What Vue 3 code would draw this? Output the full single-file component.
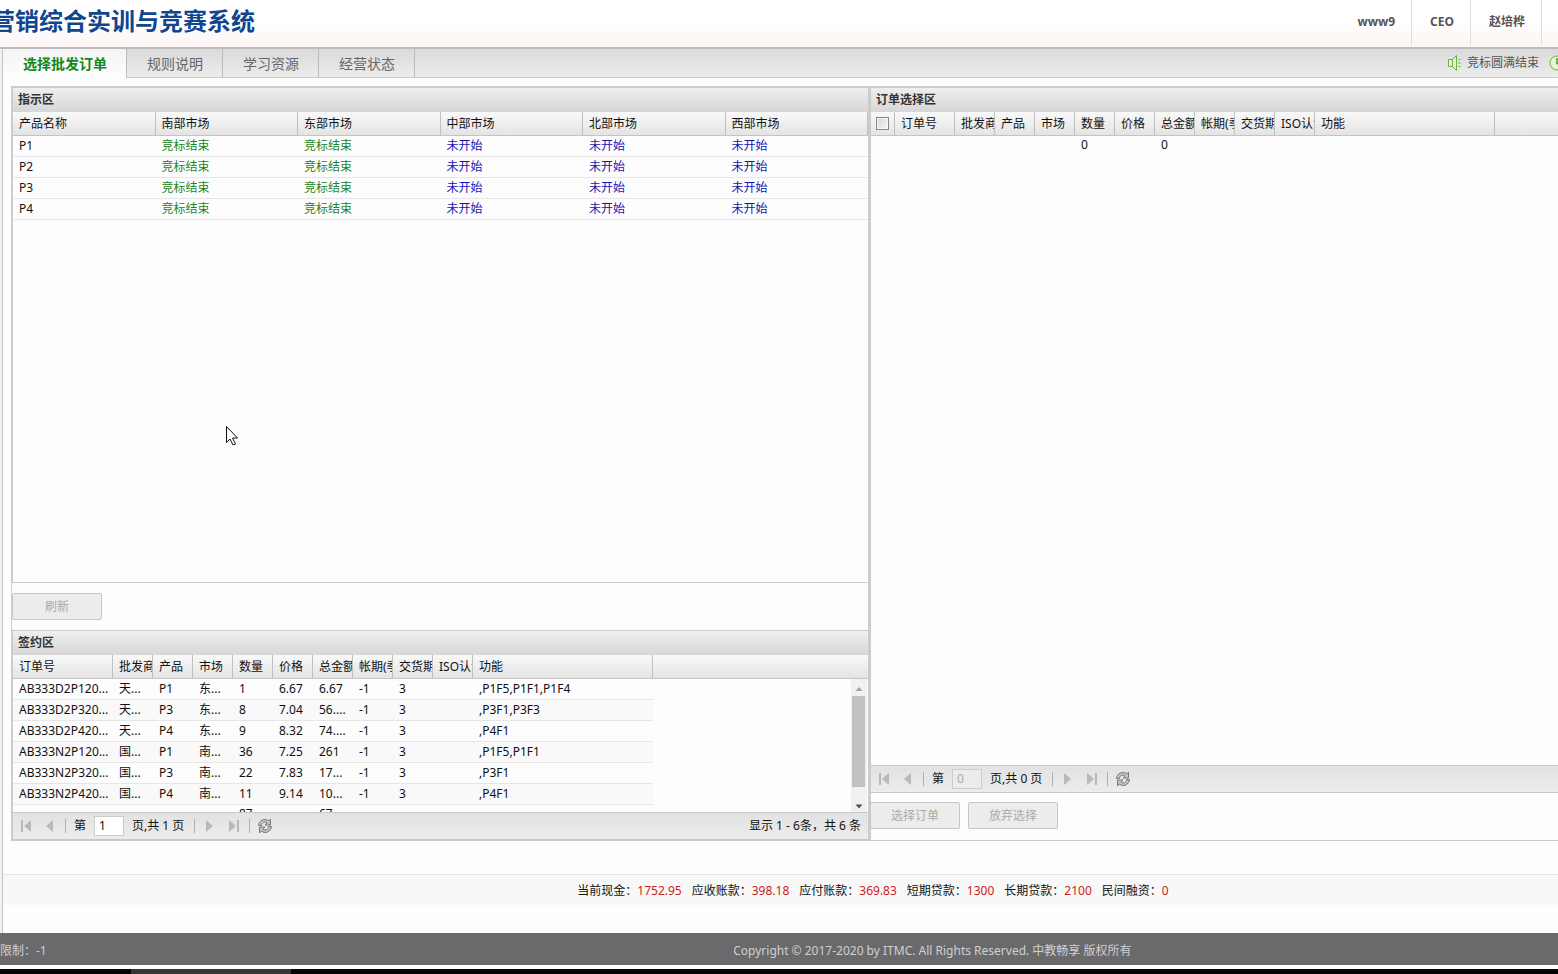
<script setup>
import { ref } from 'vue'

const users = ['www9', 'CEO', '赵培桦']
const tabs = ['选择批发订单', '规则说明', '学习资源', '经营状态']
const activeTab = ref(0)

const marketHeads = ['产品名称', '南部市场', '东部市场', '中部市场', '北部市场', '西部市场']
const done = '竞标结束'
const idle = '未开始'
const markets = ['P1', 'P2', 'P3', 'P4'].map((name) => ({ name, states: [done, done, idle, idle, idle] }))

const orderHeads = ['订单号', '批发商', '产品', '市场', '数量', '价格', '总金额', '帐期(季)', '交货期', 'ISO认证', '功能']
const signed = [
  ['AB333D2P120...', '天...', 'P1', '东...', '1', '6.67', '6.67', '-1', '3', '', ',P1F5,P1F1,P1F4'],
  ['AB333D2P320...', '天...', 'P3', '东...', '8', '7.04', '56....', '-1', '3', '', ',P3F1,P3F3'],
  ['AB333D2P420...', '天...', 'P4', '东...', '9', '8.32', '74....', '-1', '3', '', ',P4F1'],
  ['AB333N2P120...', '国...', 'P1', '南...', '36', '7.25', '261', '-1', '3', '', ',P1F5,P1F1'],
  ['AB333N2P320...', '国...', 'P3', '南...', '22', '7.83', '17...', '-1', '3', '', ',P3F1'],
  ['AB333N2P420...', '国...', 'P4', '南...', '11', '9.14', '10...', '-1', '3', '', ',P4F1'],
]
const signedTotal = ['', '', '', '', '87', '', '67...', '', '', '', '']
const orderTotal = ['', '', '', '', '0', '', '0', '', '', '', '']

const funds = [
  ['当前现金：', '1752.95'],
  ['应收账款：', '398.18'],
  ['应付账款：', '369.83'],
  ['短期贷款：', '1300'],
  ['长期贷款：', '2100'],
  ['民间融资：', '0'],
]
const signedPage = ref('1')
const orderPage = ref('0')
</script>

<template>
  <div class="page">
    <header class="top">
      <h1>营销综合实训与竞赛系统</h1>
      <ul class="users">
        <li v-for="u in users" :key="u">{{ u }}</li>
      </ul>
    </header>

    <main class="main">
      <nav class="tabbar">
        <button
          v-for="(t, i) in tabs"
          :key="t"
          type="button"
          class="tab"
          :class="{ active: i === activeTab }"
          @click="activeTab = i"
        >{{ t }}</button>
        <div class="notice">
          <svg width="14" height="16" viewBox="0 0 14 16" fill="#e3f3d3" stroke="#6fb03a">
            <path d="M1.500 4.500h4v7h-4zM5.500 4.500l4-4v15l-4-4z" />
            <path d="M11.500 4.500h2M11.500 8h2M11.500 11.500h2" fill="none" />
          </svg>
          <span>竞标圆满结束</span>
          <svg class="clock" width="16" height="16" viewBox="0 0 16 16" fill="#e3f3d3" stroke="#6fb03a">
            <circle cx="8" cy="8" r="7" />
            <path d="M8 3v5.500h4" fill="none" stroke="#4f9a20" stroke-width="1.500" />
          </svg>
        </div>
      </nav>

      <div class="work">
        <div class="left">
          <section class="panel grow">
            <h2>指示区</h2>
            <div class="grid">
              <table class="markets">
                <thead>
                  <tr><th v-for="h in marketHeads" :key="h">{{ h }}</th></tr>
                </thead>
                <tbody>
                  <tr v-for="m in markets" :key="m.name">
                    <td>{{ m.name }}</td>
                    <td v-for="(s, i) in m.states" :key="i" :class="s === done ? 'done' : 'idle'">{{ s }}</td>
                  </tr>
                </tbody>
              </table>
            </div>
          </section>

          <div class="refresh-row">
            <button type="button" class="btn" disabled>刷新</button>
          </div>

          <section class="panel contract">
            <h2>签约区</h2>
            <div class="grid signed">
              <table class="orders">
                <colgroup>
                  <col class="c-id" /><col v-for="n in 9" :key="n" class="c-s" /><col class="c-fn" />
                </colgroup>
                <thead>
                  <tr><th v-for="h in orderHeads" :key="h">{{ h }}</th></tr>
                </thead>
                <tbody>
                  <tr v-for="r in signed" :key="r[0]">
                    <td v-for="(c, i) in r" :key="i">{{ c }}</td>
                  </tr>
                  <tr class="total"><td v-for="(c, i) in signedTotal" :key="i">{{ c }}</td></tr>
                </tbody>
              </table>
              <div class="scroll">
                <svg width="16" height="17" viewBox="0 0 16 17"><path d="M4.500 12L8 8l3.500 4z" fill="#a3a3a3" /></svg>
                <div class="thumb"></div>
                <svg width="16" height="16" viewBox="0 0 16 16"><path d="M4.500 14h7L8 18z" fill="#505050" transform="translate(0 -1)" /></svg>
              </div>
            </div>
            <div class="pager">
              <button type="button" class="ic" aria-label="首页" disabled>
                <svg width="12" height="12" viewBox="0 0 12 12"><path d="M1 0h2v12H1zM11 0v12L4 6z" fill="#b9b9b9" /></svg>
              </button>
              <button type="button" class="ic" aria-label="上一页" disabled>
                <svg width="12" height="12" viewBox="0 0 12 12"><path d="M9 0v12L2 6z" fill="#b9b9b9" /></svg>
              </button>
              <i class="sep"></i>
              <label for="signed-page">第</label>
              <input id="signed-page" v-model="signedPage" type="text" />
              <span>页,共 1 页</span>
              <i class="sep"></i>
              <button type="button" class="ic" aria-label="下一页" disabled>
                <svg width="12" height="12" viewBox="0 0 12 12"><path d="M2 0v12l7-6z" fill="#b9b9b9" /></svg>
              </button>
              <button type="button" class="ic" aria-label="末页" disabled>
                <svg width="12" height="12" viewBox="0 0 12 12"><path d="M9 0h2v12H9zM1 0v12l7-6z" fill="#b9b9b9" /></svg>
              </button>
              <i class="sep"></i>
              <button type="button" class="ic" aria-label="重新加载">
                <svg width="16" height="16" viewBox="0 0 16 16" fill="none" stroke="#777">
                  <path d="M1.500 7.500C2 2.500 7.500-.5 11.500 3l2-2v6H8l2-2C7.500 3 4.500 4.500 4.500 7.500z" fill="#c4c4c4" />
                  <path d="M14.500 8.500C14 13.500 8.500 16.500 4.500 13l-2 2V9H8l-2 2c2.500 2 5.500.5 5.500-2.500z" fill="#c4c4c4" />
                </svg>
              </button>
              <span class="info">显示 1 - 6条，共 6 条</span>
            </div>
          </section>
        </div>

        <div class="right">
          <h2>订单选择区</h2>
          <div class="grid grow">
            <table class="orders select">
              <colgroup>
                <col class="c-ck" /><col class="c-id" /><col v-for="n in 9" :key="n" class="c-s" /><col class="c-fn" />
              </colgroup>
              <thead>
                <tr>
                  <th class="ck"><input type="checkbox" aria-label="全选" /></th>
                  <th v-for="h in orderHeads" :key="h">{{ h }}</th>
                </tr>
              </thead>
              <tbody>
                <tr class="total"><td></td><td v-for="(c, i) in orderTotal" :key="i">{{ c }}</td></tr>
              </tbody>
            </table>
          </div>
          <div class="pager">
            <button type="button" class="ic" aria-label="首页" disabled>
              <svg width="12" height="12" viewBox="0 0 12 12"><path d="M1 0h2v12H1zM11 0v12L4 6z" fill="#b9b9b9" /></svg>
            </button>
            <button type="button" class="ic" aria-label="上一页" disabled>
              <svg width="12" height="12" viewBox="0 0 12 12"><path d="M9 0v12L2 6z" fill="#b9b9b9" /></svg>
            </button>
            <i class="sep"></i>
            <label for="order-page">第</label>
            <input id="order-page" v-model="orderPage" type="text" disabled />
            <span>页,共 0 页</span>
            <i class="sep"></i>
            <button type="button" class="ic" aria-label="下一页" disabled>
              <svg width="12" height="12" viewBox="0 0 12 12"><path d="M2 0v12l7-6z" fill="#b9b9b9" /></svg>
            </button>
            <button type="button" class="ic" aria-label="末页" disabled>
              <svg width="12" height="12" viewBox="0 0 12 12"><path d="M9 0h2v12H9zM1 0v12l7-6z" fill="#b9b9b9" /></svg>
            </button>
            <i class="sep"></i>
            <button type="button" class="ic" aria-label="重新加载">
              <svg width="16" height="16" viewBox="0 0 16 16" fill="none" stroke="#777">
                <path d="M1.500 7.500C2 2.500 7.500-.5 11.500 3l2-2v6H8l2-2C7.500 3 4.500 4.500 4.500 7.500z" fill="#c4c4c4" />
                <path d="M14.500 8.500C14 13.500 8.500 16.500 4.500 13l-2 2V9H8l-2 2c2.500 2 5.500.5 5.500-2.500z" fill="#c4c4c4" />
              </svg>
            </button>
          </div>
          <div class="actions">
            <button type="button" class="btn" disabled>选择订单</button>
            <button type="button" class="btn" disabled>放弃选择</button>
          </div>
        </div>
      </div>

      <div class="funds">
        <span v-for="f in funds" :key="f[0]">{{ f[0] }}<b>{{ f[1] }}</b></span>
      </div>
    </main>

    <footer class="foot">
      <span>限制：-1</span>
      <p>Copyright © 2017-2020 by ITMC. All Rights Reserved. 中教畅享 版权所有</p>
    </footer>
    <div class="taskbar"><div></div></div>

    <svg class="cursor" width="13" height="20" viewBox="0 0 13 20">
      <path d="M.5.500v16l3.500-3.500 3 6 2.500-1-3-6h5z" fill="#fff" stroke="#111" />
    </svg>
  </div>
</template>

<style>
body {
  background: #fff;
}
</style>

<style scoped>
.page {
  position: relative;
  display: flex;
  flex-direction: column;
  min-height: 100vh;
  overflow: hidden;
  background: #f1f1f1;
  color: #111;
  font: 12px/20px "Noto Sans", "Noto Sans CJK SC", sans-serif;
}
.page * {
  box-sizing: border-box;
}
button,
input {
  margin: 0;
  padding: 0;
  font: inherit;
  color: inherit;
  border: 0;
  background: none;
}
h1,
h2,
p,
ul {
  margin: 0;
  padding: 0;
}
.top {
  display: flex;
  justify-content: space-between;
  height: 49px;
  border-bottom: 2px solid #bdbbbb;
  background: linear-gradient(#fff 40%, #fdf5f4);
}
h1 {
  margin-left: -9px;
  font-size: 24px;
  line-height: 42px;
  color: #10458f;
  white-space: nowrap;
}
.users {
  display: flex;
  padding-right: 16px;
  list-style: none;
  font-weight: bold;
  line-height: 43px;
  color: #555;
}
.users li {
  height: 45px;
  padding: 0 16px 0 18px;
  border-right: 1px solid #ddd;
}
.main {
  flex: 1;
  display: flex;
  flex-direction: column;
  margin-left: 2px;
  padding-bottom: 28px;
  border-left: 1px solid #c4c4c4;
  background: #fdfdfd;
}
.tabbar {
  display: flex;
  height: 29px;
  border-bottom: 1px solid #ccc;
  background: linear-gradient(#dadada, #ececec);
}
.tab {
  height: 29px;
  padding: 0 19px 0 20px;
  border-right: 1px solid #bbb;
  font-size: 14px;
  color: #666;
}
.tab.active {
  background: linear-gradient(#f4f4f4, #fdfdfd);
  font-weight: bold;
  color: #158615;
}
.notice {
  display: flex;
  align-items: center;
  gap: 6px;
  margin-left: auto;
  color: #555;
}
.notice .clock {
  margin: 0 -7px 0 4px;
}
.work {
  flex: 1;
  display: grid;
  grid-template-columns: minmax(0, 554fr) minmax(0, 446fr);
  margin: 8px 0 33px 8px;
  border-bottom: 1px solid #ccc;
}
.left {
  display: flex;
  flex-direction: column;
  border-left: 1px solid #ccc;
}
.panel {
  display: flex;
  flex-direction: column;
  border-left: 1px solid #ccc;
  border-bottom: 1px solid #ccc;
}
.contract {
  border-bottom: 0;
}
.grow {
  flex: 1;
}
h2 {
  height: 26px;
  padding-left: 5px;
  border-top: 2px solid #ccc;
  background: linear-gradient(#efefef, #d6d6d6);
  font-size: 12px;
  line-height: 23px;
  color: #333;
}
.contract h2 {
  height: 25px;
  border-top-width: 1px;
}
.grid {
  display: flex;
  align-items: flex-start;
  overflow: hidden;
  background: linear-gradient(#c4c4c4, #c4c4c4) 0 23px / 100% 1px no-repeat,
    linear-gradient(#f9f9f9, #e4e4e4) 0 0 / 100% 23px no-repeat;
}
table {
  flex: none;
  table-layout: fixed;
  border-collapse: separate;
  border-spacing: 0;
}
.markets {
  width: 100%;
}
.orders {
  width: 640px;
}
.select {
  width: 624px;
}
.c-id {
  width: 100px;
}
.select .c-id {
  width: 60px;
}
.c-ck {
  width: 24px;
}
.c-s {
  width: 40px;
}
.c-fn {
  width: 180px;
}
th,
td {
  height: 21px;
  padding: 0 0 0 6px;
  overflow: hidden;
  white-space: nowrap;
  text-align: left;
  font-weight: normal;
  line-height: 20px;
}
th {
  height: 24px;
  border-right: 1px solid #c0c0c0;
  border-bottom: 1px solid #c4c4c4;
  line-height: 22px;
}
td {
  border-bottom: 1px solid #e6e6e6;
}
.orders tbody tr:nth-child(even) td {
  background: #f9f9f9;
}
.orders .total td {
  border: 0;
  line-height: 18px;
  vertical-align: top;
}
.done {
  color: #1c851c;
}
.idle {
  color: #1414b4;
}
.ck {
  padding-left: 5px;
}
.ck input {
  display: block;
  width: 13px;
  height: 13px;
  appearance: none;
  border: 1px solid #888;
  background: linear-gradient(135deg, #d4d4d4, #fafafa);
  box-shadow: inset 0 0 0 1px #f6f6f6;
}
.refresh-row {
  padding: 10px 0;
}
.btn {
  display: block;
  width: 90px;
  height: 27px;
  border: 1px solid #c6c6c6;
  border-radius: 2px;
  background: #ececec;
  color: #aaa;
}
.signed {
  height: 157px;
}
.scroll {
  display: flex;
  flex-direction: column;
  width: 16px;
  height: 133px;
  margin: 24px 1px 0 auto;
  background: #f1f1f1;
}
.thumb {
  height: 91px;
  margin: 0 2px 0 1px;
  background: #c1c1c1;
}
.scroll svg:last-child {
  height: 25px;
}
.pager {
  display: flex;
  align-items: center;
  height: 28px;
  padding-left: 1px;
  border-top: 1px solid #c8c8c8;
  border-bottom: 1px solid #c8c8c8;
  background: linear-gradient(#e2e2e2, #ececec);
}
.ic {
  display: flex;
  align-items: center;
  justify-content: center;
  width: 24px;
  height: 24px;
}
.sep {
  width: 1px;
  height: 14px;
  margin: 0 3px;
  background: #b0b0b0;
}
.pager label {
  margin: 0 8px 0 5px;
}
.pager input {
  width: 30px;
  height: 20px;
  margin-right: 8px;
  padding-left: 4px;
  border: 1px solid #ccc;
  background: #fff;
}
.pager input:disabled {
  background: #ececec;
  color: #aaa;
}
.pager span {
  margin-right: 7px;
}
.pager .info {
  margin: 0 7px 0 auto;
}
.right {
  display: flex;
  flex-direction: column;
  border-left: 3px solid #ccc;
}
.actions {
  display: flex;
  gap: 8px;
  padding: 9px 0 11px;
}
.actions .btn:first-child {
  margin-left: -1px;
}
.funds {
  display: flex;
  justify-content: center;
  gap: 10px;
  height: 31px;
  padding-left: 185px;
  border-top: 1px solid #e2e2e2;
  background: #f8f8f8;
  line-height: 31px;
  white-space: nowrap;
}
.funds b {
  font-weight: normal;
  color: #cc1c1c;
}
.foot {
  display: flex;
  height: 32px;
  background: #6a696c;
  color: #d0d0d0;
  line-height: 36px;
  white-space: nowrap;
}
.foot p {
  flex: 1;
  padding-left: 260px;
  text-align: center;
}
.taskbar {
  height: 9px;
  border-top: 4px solid #fdfdfd;
  background: #050505;
}
.taskbar div {
  width: 160px;
  height: 5px;
  margin-left: 131px;
  background: #363636;
}
.cursor {
  position: absolute;
  left: 226px;
  top: 426px;
}
</style>
